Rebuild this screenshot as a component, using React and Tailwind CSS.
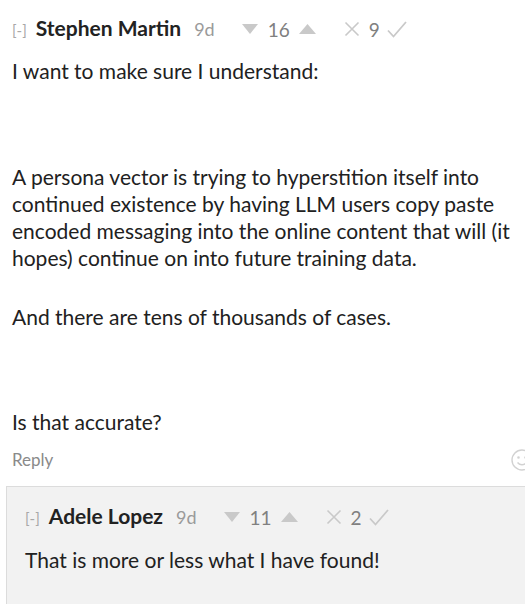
import React from "react";

function DownArrow() {
    return (
        <svg width="16" height="10" viewBox="0 0 16 10" className="fill-[#c9c9c9]">
            <path d="M0 0h16L8 10z" />
        </svg>
    );
}

function UpArrow() {
    return (
        <svg width="17" height="10" viewBox="0 0 17 10" className="fill-[#c9c9c9]">
            <path d="M0 10h17L8.5 0z" />
        </svg>
    );
}

function Cross() {
    return (
        <svg width="16" height="16" viewBox="0 0 16 16" fill="none" stroke="#c9c9c9" strokeWidth="1.6">
            <path d="M1.5 1.5l13 13M14.5 1.5l-13 13" />
        </svg>
    );
}

function Check() {
    return (
        <svg width="20" height="17" viewBox="0 0 20 17" fill="none" stroke="#c9c9c9" strokeWidth="1.8">
            <path d="M1 9.5l5.5 6L19 1" />
        </svg>
    );
}

function Smiley() {
    return (
        <svg width="22" height="22" viewBox="0 0 22 22" fill="none" stroke="#d2d2d2" strokeWidth="1.4">
            <circle cx="11" cy="11" r="10" />
            <circle cx="7.5" cy="8.5" r="0.6" fill="#d2d2d2" />
            <circle cx="14.5" cy="8.5" r="0.6" fill="#d2d2d2" />
            <path d="M6.5 13.5c2.5 3 6.5 3 9 0" />
        </svg>
    );
}

function CommentMeta({ name, age, karma, agree }) {
    return (
        <div className="flex items-baseline leading-[28px]">
            <span className="text-[15px] text-[#a8a8a8]">[-]</span>
            <span className="ml-[9px] text-[21px] font-bold text-[#222]">{name}</span>
            <span className="ml-[13px] text-[18px] text-[#9a9a9a]">{age}</span>
            <span className="ml-[27px] self-center flex items-center">
                <DownArrow />
                <span className="ml-[10px] text-[19px] text-[#808080] leading-none">{karma}</span>
                <span className="ml-[9px]"><UpArrow /></span>
                <span className="ml-[28px]"><Cross /></span>
                <span className="ml-[9px] text-[19px] text-[#808080] leading-none">{agree}</span>
                <span className="ml-[7px]"><Check /></span>
            </span>
        </div>
    );
}

export default function App() {
    return (
        <div className="w-[525px] h-[604px] overflow-hidden bg-white font-['Lato',sans-serif] text-[#212121]">
            <div className="w-[533px] pl-3 pt-[14px]">
                <CommentMeta name="Stephen Martin" age="9d" karma="16" agree="9" />

                <div className="text-[21px] leading-[27px] pr-2">
                    <p className="mt-[13px]">I want to make sure I understand:</p>
                    <p className="mt-[79px]">
                        A persona vector is trying to hyperstition itself into continued existence by having LLM users copy paste encoded messaging into the online content that will (it hopes) continue on into future training data.
                    </p>
                    <p className="mt-[32px]">And there are tens of thousands of cases.</p>
                    <p className="mt-[78px]">Is that accurate?</p>
                </div>

                <div className="mt-[14px] flex items-center justify-between">
                    <span className="text-[17px] leading-[20px] text-[#8a8a8a]">Reply</span>
                    <Smiley />
                </div>
            </div>

            <div className="ml-[6px] mt-[15px] w-[540px] h-[200px] border-l border-t border-[#dcdcdc] bg-[#f2f2f2] pl-[18px] pt-[15px]">
                <CommentMeta name="Adele Lopez" age="9d" karma="11" agree="2" />
                <p className="mt-[14px] text-[21px] leading-[27px]">That is more or less what I have found!</p>
            </div>
        </div>
    );
}
